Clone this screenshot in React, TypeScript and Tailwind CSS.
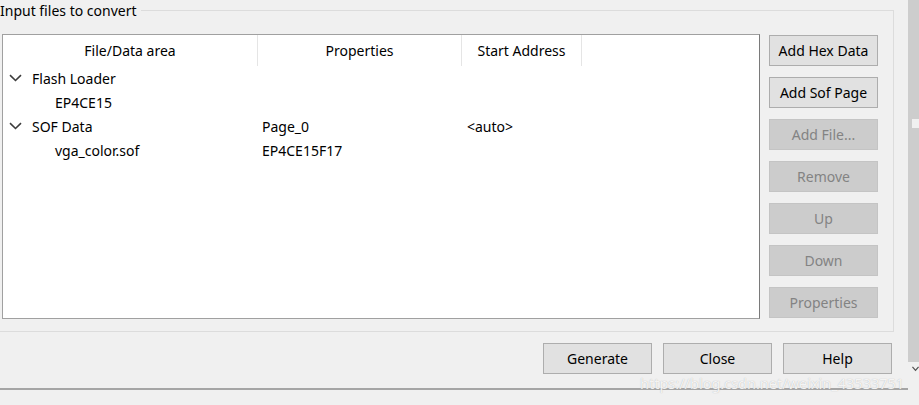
import React from "react";

type Row = { level: number; name: string; props?: string; addr?: string; open?: boolean };

const rows: Row[] = [
  { level: 0, name: "Flash Loader", open: true },
  { level: 1, name: "EP4CE15" },
  { level: 0, name: "SOF Data", props: "Page_0", addr: "<auto>", open: true },
  { level: 1, name: "vga_color.sof", props: "EP4CE15F17" },
];

const sideButtons = [
  { label: "Add Hex Data", enabled: true },
  { label: "Add Sof Page", enabled: true },
  { label: "Add File...", enabled: false },
  { label: "Remove", enabled: false },
  { label: "Up", enabled: false },
  { label: "Down", enabled: false },
  { label: "Properties", enabled: false },
];

const Chevron = () => (
  <svg width="13" height="8" viewBox="0 0 13 8" className="shrink-0">
    <path d="M1 1.2 L6.5 6.5 L12 1.2" fill="none" stroke="#3c3c3c" strokeWidth="1.6" />
  </svg>
);

const Btn = ({ label, enabled = true }: { label: string; enabled?: boolean }) => (
  <button
    className={
      enabled
        ? "w-[109px] h-[31px] border border-[#adadad] bg-[#e1e1e1] text-black flex items-center justify-center"
        : "w-[109px] h-[31px] border border-[#c4c4c4] bg-[#cccccc] text-[#838383] flex items-center justify-center"
    }
  >
    {label}
  </button>
);

export default function App() {
  return (
    <div
      className="relative w-[919px] h-[405px] overflow-hidden bg-[#f0f0f0] flex text-[14px] text-black"
      style={{ fontFamily: '"Noto Sans", "Open Sans", sans-serif' }}
    >
      <div className="w-[908px] flex flex-col">
        <fieldset className="ml-[-2px] w-[896px] h-[331px] mt-px border border-[#dcdcdc] flex">
          <legend className="ml-[1px] pr-1 leading-[19px]">Input files to convert</legend>
          <div className="flex w-full pl-[3px] pt-[14px] pr-[15px]">
            {/* tree table */}
            <div className="w-[758px] h-[285px] bg-white border border-[#a0a0a0] border-r-[#7a7a7a] flex flex-col">
              <div className="flex h-[31px] items-center">
                <div className="w-[255px] h-full flex items-center justify-center border-r border-[#e5e5e5]">File/Data area</div>
                <div className="w-[204px] h-full flex items-center justify-center border-r border-[#e5e5e5]">Properties</div>
                <div className="w-[120px] h-full flex items-center justify-center border-r border-[#e5e5e5]">Start Address</div>
              </div>
              {rows.map((r, i) => (
                <div key={i} className="flex h-[24px] items-center">
                  <div className="w-[255px] flex items-center">
                    {r.level === 0 ? (
                      <div className="flex items-center gap-[10px] pl-[6px]">
                        <Chevron />
                        <span>{r.name}</span>
                      </div>
                    ) : (
                      <span className="pl-[52px]">{r.name}</span>
                    )}
                  </div>
                  <div className="w-[204px] pl-[4px]">{r.props}</div>
                  <div className="w-[120px] pl-[5px]">{r.addr}</div>
                </div>
              ))}
            </div>
            <div className="ml-[9px] flex flex-col gap-[11px] pt-px">
              {sideButtons.map((b) => (
                <Btn key={b.label} label={b.label} enabled={b.enabled} />
              ))}
            </div>
          </div>
        </fieldset>
        <div className="flex justify-end gap-[11px] pr-[16px] mt-[11px]">
          <Btn label="Generate" />
          <Btn label="Close" />
          <Btn label="Help" />
        </div>
        <div className="mt-[14px] border-t-2 border-[#a5a5a5] flex-1" />
      </div>
      <div className="w-[11px] flex flex-col">
        <div className="h-[362px] bg-[#cdcdcd] flex flex-col pl-[4px]">
          <div className="mt-[119px] h-[9px] bg-[#f0f0f0]" />
        </div>
        <div className="flex justify-center pt-[4px] pl-[4px]">
          <svg width="8" height="6" viewBox="0 0 8 6">
            <path d="M0.5 0.5 L4 4.5 L7.5 0.5" fill="none" stroke="#505050" strokeWidth="1.4" />
          </svg>
        </div>
      </div>
      <div className="absolute left-[640px] top-[373px] whitespace-nowrap text-[14.5px] text-white/85 [text-shadow:0_0_1px_#aaaaaa]">
        https://blog.csdn.net/weixin_43533751
      </div>
    </div>
  );
}
